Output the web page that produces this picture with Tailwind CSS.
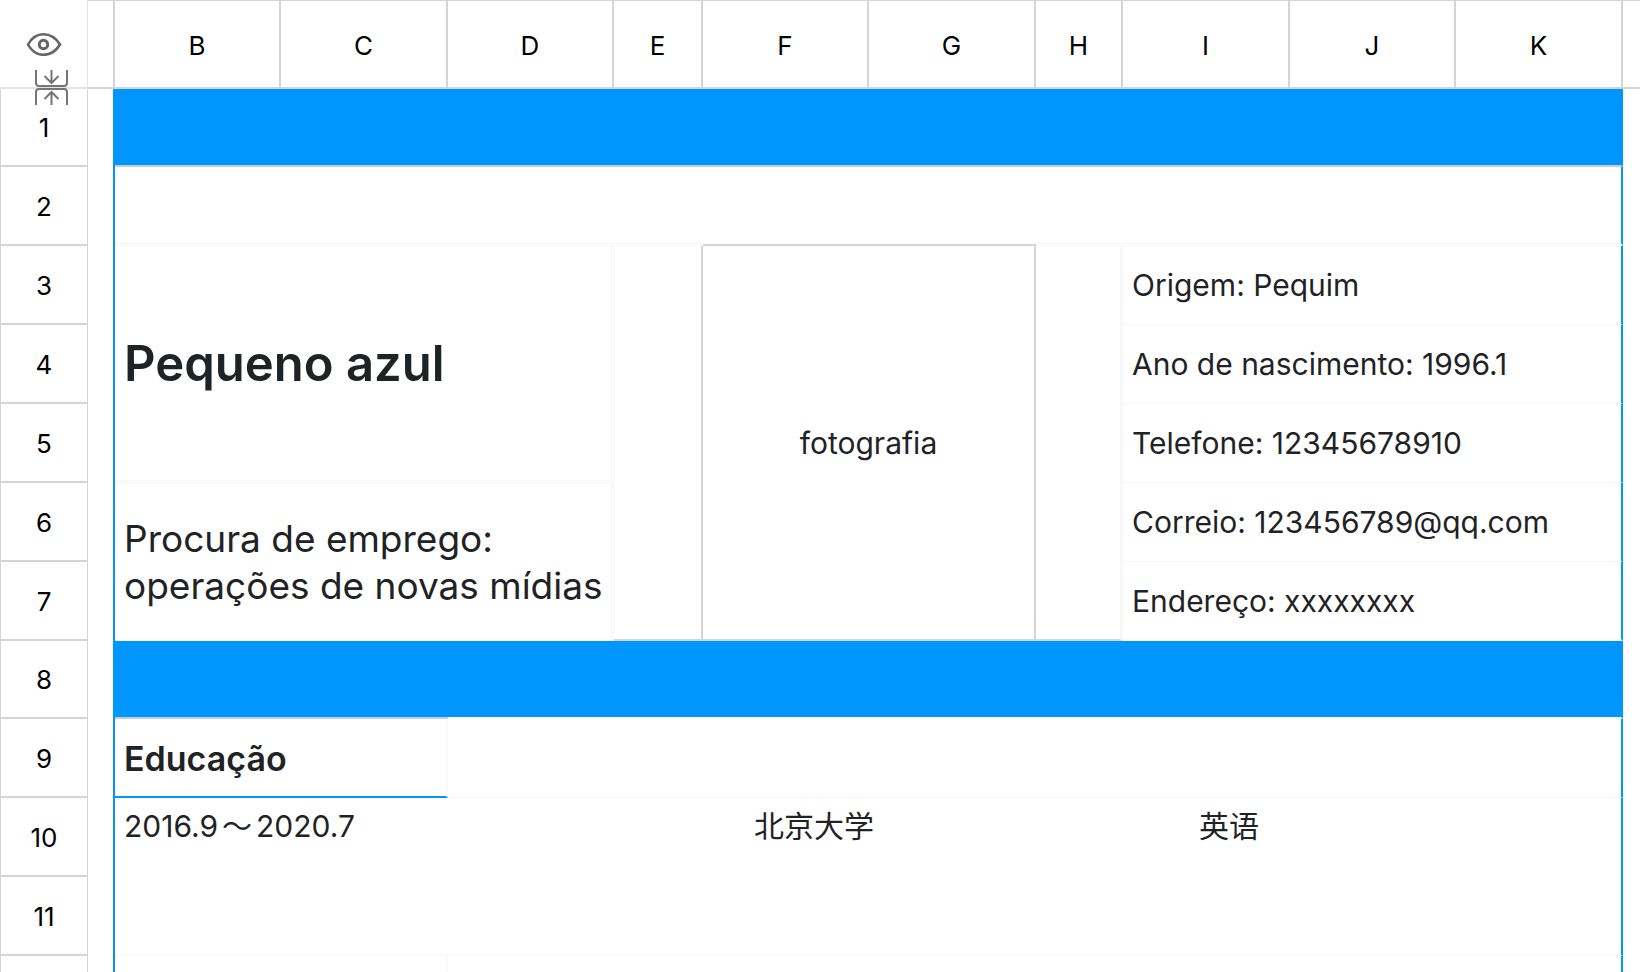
<!DOCTYPE html>
<html lang="pt">
<head>
<meta charset="utf-8">
<title>Pequeno azul</title>
<script src="https://cdn.jsdelivr.net/npm/@tailwindcss/browser@4"></script>
</head>
<body class="bg-white font-['Inter','Noto_Sans_CJK_SC',sans-serif] text-[#1f2326]">
<main class="relative h-screen overflow-hidden">
  <table class="w-full table-fixed border-separate border-spacing-0 text-left">
    <colgroup>
      <col class="w-[88px]"><col class="w-[27px]"><col class="w-[166px]"><col class="w-[167px]"><col class="w-[166px]"><col class="w-[89px]"><col class="w-[166px]"><col class="w-[167px]"><col class="w-[87px]"><col class="w-[167px]"><col class="w-[166px]"><col class="w-[167px]"><col>
    </colgroup>
    <thead class="[&_th]:border-[#d5d5d5] [&_th]:px-0 [&_th]:pt-0.5 [&_th]:pb-0 [&_th]:text-center [&_th]:text-[26px] [&_th]:font-normal [&_th]:text-black">
      <tr class="h-[89px]">
        <td class="border-r border-b-2 border-[#e3e3e3] p-0 text-center">
          <button type="button" aria-label="Mostrar" class="block w-full pl-[26px]">
            <svg class="h-6 w-9" viewBox="0 0 36 24" fill="none" stroke="#666" stroke-width="2.6"><path d="M2 12.500C5.500 6 11 2.200 17.500 2.200S30 6 34 12.500C30 19 24 22.800 17.500 22.800S5.500 19 2 12.500Z"/><circle cx="17.500" cy="12.500" r="4.200" stroke-width="3"/></svg>
          </button>
        </td>
        <td class="border-t border-r-2 border-b-2 border-[#d5d5d5]"></td>
        <th scope="col" class="border-t border-r-2 border-b-2">B</th>
        <th scope="col" class="border-t border-r-2 border-b-2">C</th>
        <th scope="col" class="border-t border-r-2 border-b-2">D</th>
        <th scope="col" class="border-t border-r-2 border-b-2">E</th>
        <th scope="col" class="border-t border-r-2 border-b-2">F</th>
        <th scope="col" class="border-t border-r-2 border-b-2">G</th>
        <th scope="col" class="border-t border-r-2 border-b-2">H</th>
        <th scope="col" class="border-t border-r-2 border-b-2">I</th>
        <th scope="col" class="border-t border-r-2 border-b-2">J</th>
        <th scope="col" class="border-t border-r-2 border-b-2">K</th>
        <td class="border-t border-b-2 border-[#d5d5d5]"></td>
      </tr>
    </thead>
    <tbody class="text-[30px] leading-9 [&_td]:px-[9px] [&_th]:border-r [&_th]:border-b-2 [&_th]:border-l [&_th]:border-[#d5d5d5] [&_th]:px-0 [&_th]:pt-0.5 [&_th]:pb-0 [&_th]:text-center [&_th]:text-[26px] [&_th]:font-normal [&_th]:text-black">
      <tr class="h-[78px]">
        <th scope="row">1</th>
        <td rowspan="12" class="border-r-2 border-[#0096ff]"></td>
        <td colspan="10" class="border-r-2 border-b-2 border-r-[#0096ff] border-b-[#c9cdd1] bg-[#0096ff]"></td>
        <td rowspan="12"></td>
      </tr>
      <tr class="h-[79px]">
        <th scope="row">2</th>
        <td colspan="4" class="border-b-3 border-double border-[#f6f6f6]"></td>
        <td colspan="2" class="border-b-2 border-[#d5d5d5]"></td>
        <td colspan="4" class="border-r-2 border-b-3 border-r-[#0096ff] border-b-[#f6f6f6] [border-bottom-style:double]"></td>
      </tr>
      <tr class="h-[79px]">
        <th scope="row">3</th>
        <td colspan="3" rowspan="3" class="border-r-3 border-b-3 border-double border-[#f6f6f6] pt-0.5 pb-0 text-[49px] leading-[60px] font-semibold">Pequeno azul</td>
        <td rowspan="5" class="border-r-2 border-b-2 border-[#d5d5d5]"></td>
        <td colspan="2" rowspan="5" class="border-r-2 border-b-2 border-[#d5d5d5] py-0 text-center">fotografia</td>
        <td rowspan="5" class="border-r-3 border-b-2 border-r-[#f6f6f6] border-b-[#d5d5d5] [border-right-style:double]"></td>
        <td colspan="3" class="border-r-2 border-b border-r-[#0096ff] border-b-[#f6f6f6] py-0">Origem: Pequim</td>
      </tr>
      <tr class="h-[79px]">
        <th scope="row">4</th>
        <td colspan="3" class="border-r-2 border-b border-r-[#0096ff] border-b-[#f6f6f6] py-0">Ano de nascimento: 1996.1</td>
      </tr>
      <tr class="h-[79px]">
        <th scope="row">5</th>
        <td colspan="3" class="border-r-2 border-b border-r-[#0096ff] border-b-[#f6f6f6] py-0">Telefone: 12345678910</td>
      </tr>
      <tr class="h-[79px]">
        <th scope="row">6</th>
        <td colspan="3" rowspan="2" class="border-r-3 border-b-2 border-double border-r-[#f6f6f6] border-b-white pt-0.5 pb-0 text-[37px] leading-[47px] whitespace-nowrap">Procura de emprego:<br>operações de novas mídias</td>
        <td colspan="3" class="border-r-2 border-b border-r-[#0096ff] border-b-[#f6f6f6] py-0">Correio: 123456789@qq.com</td>
      </tr>
      <tr class="h-[79px]">
        <th scope="row">7</th>
        <td colspan="3" class="border-r-2 border-b-2 border-r-[#0096ff] border-b-white py-0">Endereço: xxxxxxxx</td>
      </tr>
      <tr class="h-[78px]">
        <th scope="row">8</th>
        <td colspan="2" class="border-b-2 border-[#c9cdd1] bg-[#0096ff]"></td>
        <td colspan="8" class="border-r-2 border-b-2 border-r-[#0096ff] border-b-[#f9f9f9] bg-[#0096ff]"></td>
      </tr>
      <tr class="h-[79px]">
        <th scope="row">9</th>
        <td colspan="2" class="border-r-2 border-b-2 border-r-[#f9f9f9] border-b-[#0096ff] pt-0.5 pb-0 text-[34px] leading-10 font-semibold">Educação</td>
        <td colspan="8" class="border-r-2 border-b border-r-[#0096ff] border-b-[#f6f6f6]"></td>
      </tr>
      <tr class="h-[79px]">
        <th scope="row">10</th>
        <td colspan="10" rowspan="2" class="border-r-2 border-b border-r-[#0096ff] border-b-[#f6f6f6] py-0 align-top">
          <div class="flex pt-2.5"><span class="w-[630px]">2016.9<span class="px-1">～</span>2020.7</span><span class="w-[445px]">北京大学</span><span>英语</span></div>
        </td>
      </tr>
      <tr class="h-[79px]">
        <th scope="row">11</th>
      </tr>
      <tr class="h-[79px]">
        <th scope="row"></th>
        <td colspan="2" class="border-r-2 border-[#f9f9f9]"></td>
        <td colspan="8" class="border-r-2 border-[#0096ff]"></td>
      </tr>
    </tbody>
  </table>
  <!-- Row collapse handle, straddles the header line -->
  <button type="button" aria-label="Recolher linhas" class="absolute top-[70px] left-[35px]">
    <svg class="h-9 w-[34px]" viewBox="0 0 34 36" fill="none" stroke="#757575" stroke-width="2"><path d="M1 0V13Q1 16 4 16H29Q32 16 32 13V0M16.500 0V13M9.500 6L16.500 13L23.500 6M1 35V22Q1 19 4 19H29Q32 19 32 22V35M16.500 35V22M9.500 29L16.500 22L23.500 29"/></svg>
  </button>
</main>
</body>
</html>
